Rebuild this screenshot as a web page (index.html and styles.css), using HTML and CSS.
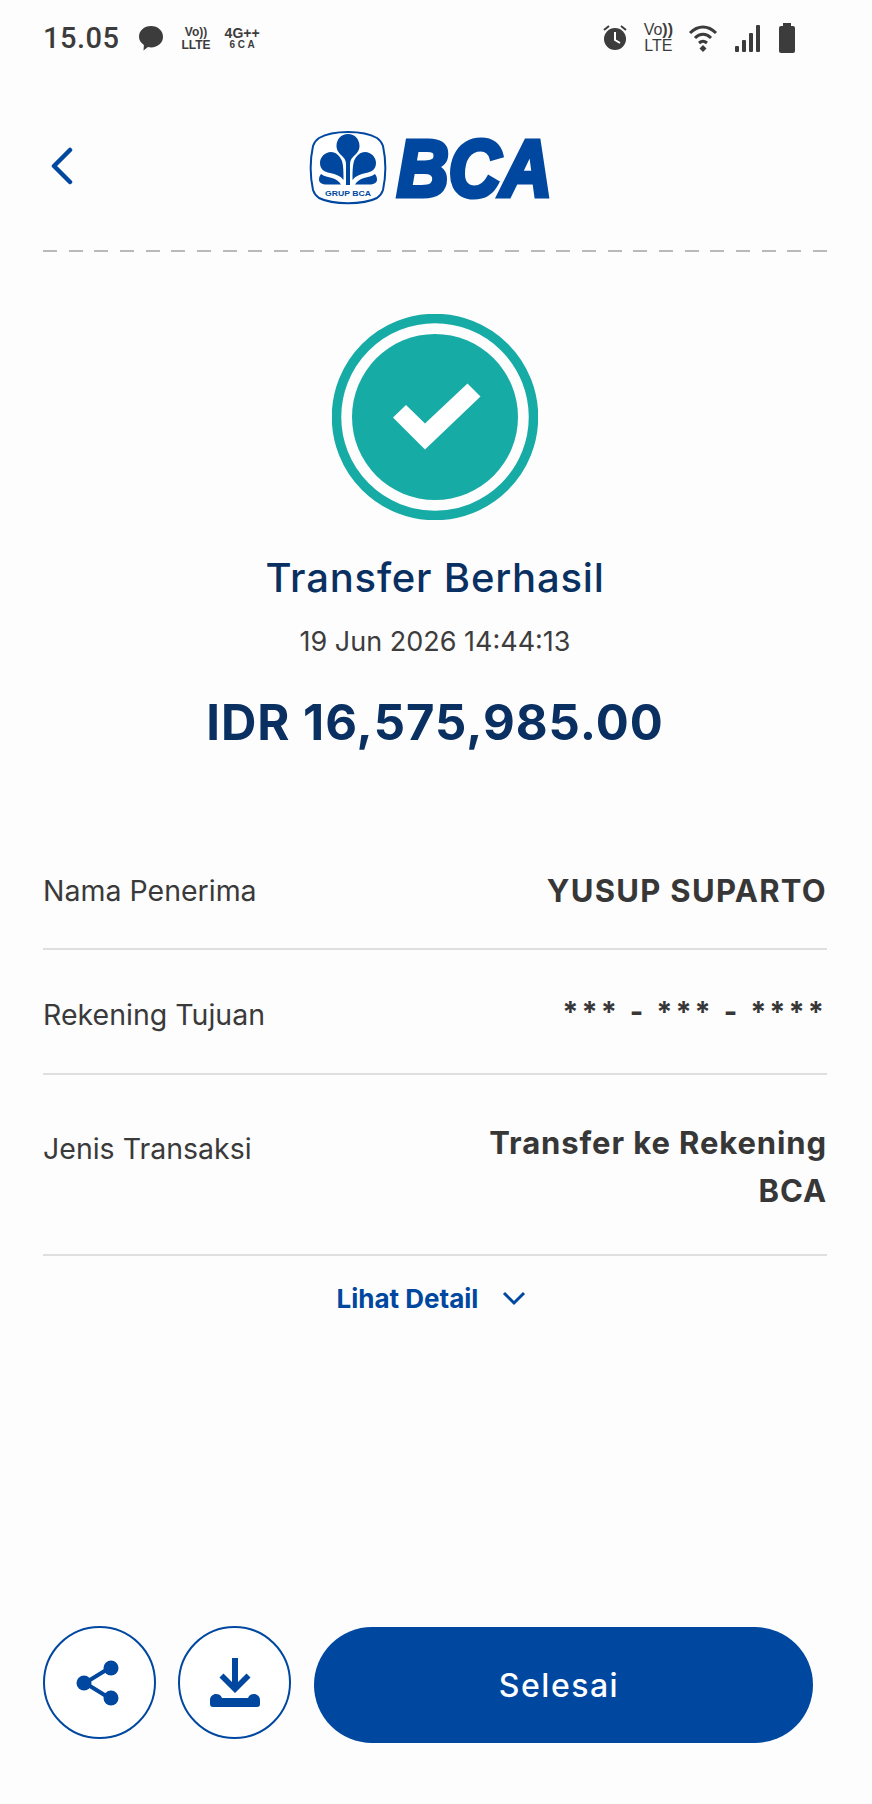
FILE: index.html
```html
<!DOCTYPE html>
<html lang="id">
<head>
  <meta charset="UTF-8">
  <title>Transfer Berhasil</title>
  <meta name="viewport" content="width=device-width,initial-scale=1">
  <link rel="stylesheet" href="styles.css">
</head>
<body>
  <div class="status">
    <div class="status-left">
      <span class="clock">15.05</span>
      <svg class="ic-msg" width="28" height="28" viewBox="0 0 28 28"><path d="M14 2c7 0 12 4.800 12 10.700S21 23.400 14 23.400c-1 0-2 0-3-.3L6.500 26.500l.4-5.500C4 19 2 16 2 12.700 2 6.800 7 2 14 2z" fill="#3c3c3c"/></svg>
      <span class="net net-small"><b>Vo<i>))</i></b><b>LLTE</b></span>
      <span class="net net-small net-4g"><b>4G<i>++</i></b><b class="tiny">6 C A</b></span>
    </div>
    <div class="status-right">
      <svg width="28" height="30" viewBox="0 0 28 30"><circle cx="14" cy="16" r="11" fill="#3c3c3c"/><path d="M14 9v8l5 3" fill="none" stroke="#fff" stroke-width="2"/><path d="M3 7l5-4M25 7l-5-4" stroke="#3c3c3c" stroke-width="2"/></svg>
      <span class="net net-big"><b>Vo<i>))</i></b><b>LTE</b></span>
      <svg width="30" height="30" viewBox="0 0 30 30" fill="none" stroke="#3c3c3c" stroke-width="3"><path d="M2 10c8-8 18-8 26 0"/><path d="M7 15c5-5 11-5 16 0"/><path d="M11 20c3-2.500 5-2.500 8 0"/><path d="M15 22l3.500 3.500L15 29l-3.500-3.500z" fill="#3c3c3c" stroke="none"/></svg>
      <svg width="30" height="30" viewBox="0 0 30 30" fill="#3c3c3c"><rect x="2" y="23" width="4" height="6" rx="1"/><rect x="9" y="17" width="4" height="12" rx="1"/><rect x="16" y="10" width="4" height="19" rx="1"/><rect x="23" y="2" width="4" height="27" rx="1"/></svg>
      <svg width="18" height="32" viewBox="0 0 18 32" fill="#3c3c3c"><rect x="5" y="1" width="8" height="4"/><rect x="1" y="4" width="16" height="27" rx="2"/></svg>
    </div>
  </div>

  <header class="top">
    <svg class="back" width="24" height="38" viewBox="0 0 24 38"><path d="M20 3L4 19l16 16" fill="none" stroke="#0047a0" stroke-width="4.500" stroke-linecap="round" stroke-linejoin="round"/></svg>
    <svg class="logo" width="280" height="104" viewBox="0 -12 280 104">
      <path d="M39 2c12 0 22 2 29 6 3 2 5 5 6 8 3 14 3 30 0 44-1 3-3 6-6 8-14 7-44 7-58 0-3-2-5-5-6-8C1 46 1 30 4 16c1-3 3-6 6-8C17 4 27 2 39 2z" fill="#fff" stroke="#0047a0" stroke-width="2"/>
      <g fill="#0047a0">
        <path d="M39 4c7 0 11.500 5.500 11.500 12 0 5-3.500 8-6.500 11-2 2-3 4-3 8v20h-4V35c0-4-1-6-3-8-3-3-6.500-6-6.500-11C27.500 9.500 32 4 39 4z"/>
        <path d="M34.500 50c0-8 0-14-1.500-19-2-5-6-9-11-9-6 0-11 5-11 11 0 6 4 9 10 10 6 1 10.500 3 13.500 7z"/>
        <path d="M43.500 50c0-8 0-14 1.500-19 2-5 6-9 11-9 6 0 11 5 11 11 0 6-4 9-10 10-6 1-10.500 3-13.500 7z"/>
        <path d="M12 44c3 2.500 7 3 11 4 4 1 7 3.500 9 6.500H18c-5 0-8-1.500-8-5 0-2 .8-4 2-5.500z"/>
        <path d="M66 44c-3 2.500-7 3-11 4-4 1-7 3.500-9 6.500h14c5 0 8-1.500 8-5 0-2-.8-4-2-5.500z"/>
      </g>
      <text class="logo-small" x="39" y="66" text-anchor="middle" textLength="46" lengthAdjust="spacingAndGlyphs">GRUP BCA</text>
      <text class="logo-word" x="88" y="66" textLength="155" lengthAdjust="spacingAndGlyphs">BCA</text>
    </svg>
    <span></span>
  </header>
  <div class="dashes"></div>

  <section class="hero">
    <svg class="tick" width="206" height="206" viewBox="0 0 206 206">
      <circle cx="103" cy="103" r="98.500" fill="none" stroke="#17aba6" stroke-width="9.500"/>
      <circle cx="103" cy="103" r="83" fill="#17aba6"/>
      <path d="M61 103.500l13-12.500 19 18.500 42.500-40 13 13-55.500 53z" fill="#fff"/>
    </svg>
    <h1>Transfer Berhasil</h1>
    <p class="date">19 Jun 2026 14:44:13</p>
    <p class="amount">IDR 16,575,985.00</p>
  </section>

  <section class="rows">
    <div class="row row-a">
      <span class="label">Nama Penerima</span>
      <span class="value">YUSUP SUPARTO</span>
    </div>
    <div class="row row-b">
      <span class="label">Rekening Tujuan</span>
      <span class="value mask">*** - *** - ****</span>
    </div>
    <div class="row row-c">
      <span class="label">Jenis Transaksi</span>
      <span class="value wrap">Transfer ke Rekening BCA</span>
    </div>
  </section>

  <div class="more">
    <span>Lihat Detail</span>
    <svg width="24" height="15" viewBox="0 0 24 15"><path d="M2 2l10 10L22 2" fill="none" stroke="#0047a0" stroke-width="3"/></svg>
  </div>

  <footer class="actions">
    <button class="round" aria-label="Bagikan">
      <svg class="ic-share" width="44" height="46" viewBox="0 0 44 46"><path d="M35 7L9 23l26 16" fill="none" stroke="#0047a0" stroke-width="4"/><circle cx="35" cy="8" r="7.500" fill="#0047a0"/><circle cx="8" cy="23" r="7.500" fill="#0047a0"/><circle cx="35" cy="38" r="7.500" fill="#0047a0"/></svg>
    </button>
    <button class="round" aria-label="Unduh">
      <svg width="50" height="50" viewBox="0 0 50 50" fill="#0047a0"><path d="M22 0h6v24l8.500-8.500 4 4L25 35 9.500 19.500l4-4L22 24z"/><path d="M6 36c3 0 5 1.500 6 4h26c1-2.500 3-4 6-4s6 2.500 6 6v4c0 2-1 3-3 3H3c-2 0-3-1-3-3v-4c0-3.500 3-6 6-6z"/></svg>
    </button>
    <button class="done">Selesai</button>
  </footer>
</body>
</html>
```

FILE: styles.css
```css
html,body{height:100%}
body{margin:0;background:#fdfdfd;color:#333;font-family:Inter,"Noto Sans",sans-serif;display:flex;flex-direction:column;min-height:1804px;box-sizing:border-box;padding:0 45px 61px 43px}
p,h1{margin:0}

.status{height:76px;display:flex;justify-content:space-between;align-items:center;color:#3c3c3c}
.status-left,.status-right{display:flex;align-items:center}
.status-left{gap:17px}
.status-right{gap:15px;margin-right:31px}
.clock{font-size:29px;font-weight:500;font-family:Roboto,sans-serif;letter-spacing:.5px}
.net{display:flex;flex-direction:column;align-items:center;font-family:"Liberation Sans",sans-serif;line-height:1}
.net b{font-weight:400}
.net i{font-style:normal;font-weight:700}
.net-small{font-size:12px;gap:1px}
.net-small b{font-weight:700}
.net-4g{font-size:14px;gap:0;margin-left:-3px}
.net-big{font-size:16px}
.tiny{font-size:10px;letter-spacing:0}

.top{height:174px;box-sizing:border-box;padding-top:13px;display:grid;grid-template-columns:1fr auto 1fr;align-items:center}
.back{margin:0 0 7px 7px}
.logo{margin-left:27px}
.logo-small{font:700 7.500px "Liberation Sans",sans-serif;fill:#0047a0}
.logo-word{font:italic 700 80px "Liberation Sans",sans-serif;fill:#0047a0;stroke:#0047a0;stroke-width:5px}
.dashes{height:2px;background:repeating-linear-gradient(90deg,#b9b9b9 0 14px,transparent 14px 25.670px)}

.hero{display:flex;flex-direction:column;align-items:center;margin-top:62px}
.tick{display:block}
.hero h1{margin-top:34px;font-size:40px;font-weight:500;color:#0a3062;line-height:48px;letter-spacing:.8px}
.date{margin-top:24px;font-size:27px;line-height:32px;color:#3d3d3d}
.amount{margin-top:35px;font-size:49px;font-weight:700;line-height:60px;color:#0a3062;letter-spacing:1px}

.rows{margin-top:72px}
.row{display:flex;justify-content:space-between;border-bottom:2px solid #dedfe1;box-sizing:border-box}
.row-a{height:125px;align-items:flex-start;padding-top:48px}
.row-b{height:125px;padding-top:0;align-items:center}
.row-b .label{margin-top:6px}
.row-c{height:181px;padding-top:44px;align-items:flex-start}
.row-c .label{margin-top:12px}
.label{font-size:28.500px;line-height:36px;color:#3a3a3a}
.value{font-size:31px;letter-spacing:.9px;font-weight:700;line-height:48px;color:#373737;text-align:right}
.row-a .value{line-height:36px;letter-spacing:1.300px}
.value.mask{font-size:29px;letter-spacing:3px}
.wrap{width:360px}

.more{display:flex;justify-content:center;align-items:center;gap:24px;margin-top:27px;color:#0047a0;font-size:26px;font-weight:700;margin-left:-7px}

.actions{margin-top:auto;display:flex;align-items:flex-start;gap:22px}
button{font-family:inherit;cursor:pointer;padding:0}
.round{width:113px;height:113px;margin-top:-1px;border:2px solid #0047a0;border-radius:50%;background:#fff;display:flex;align-items:center;justify-content:center}
.ic-share{margin-right:4px}
.done{width:499px;height:116px;margin-left:1px;padding-right:9px;border:none;border-radius:58px;background:#0047a0;color:#fff;font-size:32px;font-weight:500;letter-spacing:1.500px}
```
